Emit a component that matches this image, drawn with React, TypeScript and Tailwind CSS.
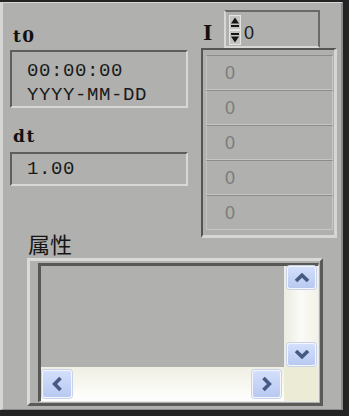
import React from "react";

const serif = { fontFamily: '"DejaVu Serif", serif' };
const mono = { fontFamily: '"Liberation Mono", monospace' };
const sans = { fontFamily: '"Liberation Sans", Arial, sans-serif' };
const cjk = { fontFamily: '"Noto Sans CJK SC", "Liberation Sans", sans-serif' };

function SpinArrows() {
  return (
    <svg width="12" height="30" viewBox="0 0 12 30">
      <rect x="0.5" y="0.5" width="11" height="14" fill="#c4c4c2" stroke="#e4e4e2" />
      <rect x="0.5" y="15.5" width="11" height="14" fill="#c4c4c2" stroke="#e4e4e2" />
      <path d="M6 2.5 L10 8.5 L2 8.5 Z" fill="#151515" />
      <rect x="2" y="10" width="8" height="2" fill="#151515" />
      <rect x="2" y="18" width="8" height="2" fill="#151515" />
      <path d="M2 21.5 L10 21.5 L6 27.5 Z" fill="#151515" />
    </svg>
  );
}

function Chevron({ dir }: { dir: "up" | "down" | "left" | "right" }) {
  const paths: Record<string, { w: number; h: number; d: string }> = {
    up: { w: 16, h: 9, d: "M2 8 L8 2.2 L14 8" },
    down: { w: 16, h: 9, d: "M2 1 L8 6.8 L14 1" },
    left: { w: 10, h: 16, d: "M8.5 2 L2.6 8 L8.5 14" },
    right: { w: 10, h: 16, d: "M1.5 2 L7.4 8 L1.5 14" },
  };
  const p = paths[dir];
  return (
    <svg width={p.w} height={p.h} viewBox={`0 0 ${p.w} ${p.h}`}>
      <path d={p.d} fill="none" stroke="#465a84" strokeWidth="3.6" />
    </svg>
  );
}

function ScrollButton({ dir, className }: { dir: "up" | "down" | "left" | "right"; className: string }) {
  return (
    <div
      className={`flex items-center justify-center rounded-[3px] border border-[#f4f6fc] bg-gradient-to-b from-[#d3dffb] to-[#b8c9f1] shadow-[0_0_0_1px_#c9d3e8] ${className}`}
    >
      <Chevron dir={dir} />
    </div>
  );
}

function Cell() {
  return (
    <div className="flex h-[35px] items-center border-t border-l border-t-[#8c8c8a] border-l-[#c2c2c0] border-r border-b border-r-[#c6c6c4] border-b-[#c6c6c4] pl-[18px]">
      <span className="text-[18px] leading-[18px] text-[#7c7c7a]" style={sans}>
        0
      </span>
    </div>
  );
}

export default function App() {
  return (
    <div className="h-[416px] w-[349px] overflow-hidden bg-[#242424] pt-[2px] pr-[6px] pb-[6px]">
      <div className="flex h-full flex-col border-t border-l-[3px] border-t-[#d6d6d4] border-l-[#d6d6d4] border-r-2 border-b border-r-[#8a8a88] border-b-[#8a8a88] bg-[#b0b0ae]">
        <div className="flex items-start">
          {/* left column */}
          <div className="ml-[7px] w-[178px]">
            <div className="mt-[25px] pl-[3px] text-[17px] font-bold leading-[16px] tracking-[1.5px] text-[#111]" style={serif}>
              t0
            </div>
            <div className="mt-[6px] h-[58px] border-2 border-t-[#5e5e5c] border-l-[#5e5e5c] border-r-[#d8d8d6] border-b-[#d8d8d6] pl-[15px] pt-[7px] text-[19px] leading-[24px] tracking-[0.6px] text-[#1a1a1a]" style={mono}>
              <div>00:00:00</div>
              <div>YYYY-MM-DD</div>
            </div>
            <div className="mt-[20px] pl-[3px] text-[17px] font-bold leading-[16px] tracking-[1.5px] text-[#111]" style={serif}>
              dt
            </div>
            <div className="mt-[8px] flex h-[34px] items-center border-2 border-t-[#5e5e5c] border-l-[#5e5e5c] border-r-[#d8d8d6] border-b-[#d8d8d6] pl-[15px] text-[19px] leading-[24px] tracking-[0.6px] text-[#1a1a1a]" style={mono}>
              1.00
            </div>
            <div className="mt-[46px] pl-[18px] text-[22px] leading-[22px] text-[#151515]" style={cjk}>
              属性
            </div>
          </div>

          {/* right column */}
          <div className="ml-[13px] mt-[7px] w-[136px]">
            <div className="flex h-[38px]">
              <div className="w-[23px] pl-[2px] pt-[13px] text-[24px] font-bold leading-[18px] text-[#111]" style={{ fontFamily: '"Liberation Serif", serif' }}>
                I
              </div>
              <div className="flex h-[38px] w-[96px] items-start border-2 border-t-[#6a6a68] border-r-[#6a6a68] border-l-[#d8d8d6] border-b-[#d8d8d6] pl-[3px] pt-[3px]">
                <SpinArrows />
                <span className="ml-[3px] mt-[9px] text-[18px] leading-[18px] text-[#1a1a1a]" style={sans}>
                  0
                </span>
              </div>
            </div>
            <div className="border-t-2 border-l-2 border-t-[#555553] border-l-[#555553] border-r-[3px] border-b-[3px] border-r-[#d6d6d4] border-b-[#d6d6d4] pl-[3px] pr-[1px] pt-[5px] pb-[5px]">
              <Cell />
              <Cell />
              <Cell />
              <Cell />
              <Cell />
            </div>
          </div>
        </div>

        {/* listbox */}
        <div className="ml-[24px] mt-[4px] h-[148px] w-[296px] border-[3px] border-t-[#dadad8] border-l-[#dadad8] border-r-[#5a5a58] border-b-[#5a5a58] pl-[8px] pt-[2px] pr-[1px] pb-[1px]">
          <div className="grid grid-cols-[243px_34px] grid-rows-[101px_34px] border-t-[3px] border-l-[3px] border-t-[#575755] border-l-[#575755] border-r border-b border-r-[#e8e8e6] border-b-[#e8e8e6]">
            <div className="bg-[#b0b0ae]" />
            <div className="flex flex-col justify-between bg-gradient-to-r from-[#ecece2] via-[#fbfbf7] to-[#f2f2e8] pl-[3px] pr-[2px] pb-[1px]">
              <ScrollButton dir="up" className="h-[23px] w-[29px]" />
              <ScrollButton dir="down" className="h-[23px] w-[29px]" />
            </div>
            <div className="flex items-center justify-between bg-gradient-to-b from-[#efefe3] to-white pl-[1px] pr-[3px]">
              <ScrollButton dir="left" className="h-[28px] w-[30px]" />
              <ScrollButton dir="right" className="h-[28px] w-[29px]" />
            </div>
            <div className="bg-[#ebebd6]" />
          </div>
        </div>
      </div>
    </div>
  );
}
